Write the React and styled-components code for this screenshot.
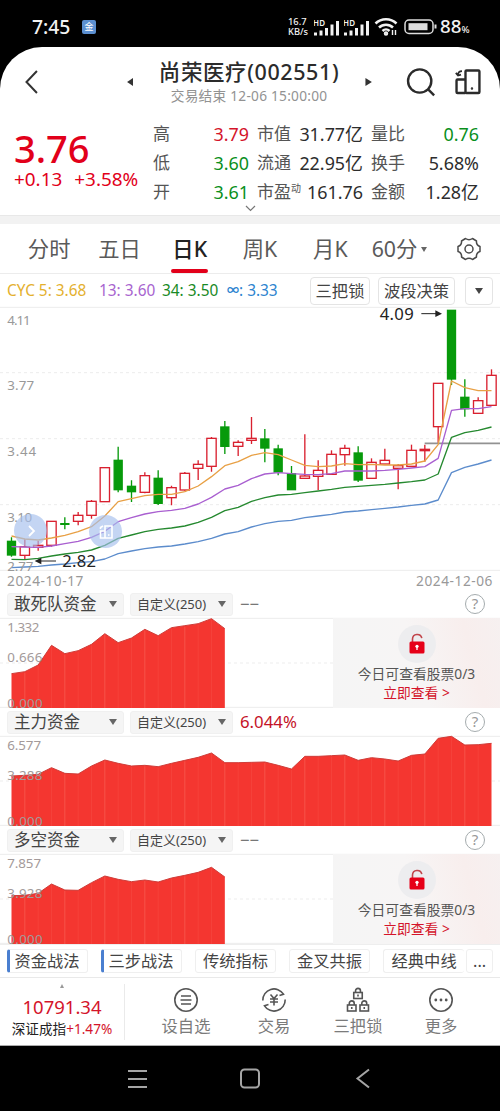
import React from 'react';
import styled, { createGlobalStyle } from 'styled-components';

const RED = '#e2001a';
const GREEN = '#0a8f1c';

const GlobalStyle = createGlobalStyle`
  * { box-sizing: border-box; }
  body {
    margin: 0;
    background: #000;
    font-family: "Noto Sans", "Noto Sans CJK SC", sans-serif;
    color: #333;
  }
`;

const Screen = styled.div`
  width: 500px;
  height: 1111px;
  display: flex;
  flex-direction: column;
  background: #000;
  overflow: hidden;
  white-space: nowrap;
`;

const Page = styled.main`
  height: 999px;
  border-radius: 42px 42px 0 0;
  background: #fff;
  overflow: hidden;
  border-bottom: 1px solid #aaa;
`;

/* status bar */

const StatusBar = styled.div`
  height: 47px;
  padding: 7px 27px 0 32px;
  display: flex;
  align-items: center;
  color: #f2f2f2;
`;

const Clock = styled.div`
  font-size: 19.3px;
  line-height: 24px;
  font-weight: 500;
  width: 50px;
`;

const AppBadge = styled.div`
  width: 14px;
  height: 14px;
  border-radius: 2px;
  background: #5b8fd0;
  color: #fff;
  font-size: 9px;
  line-height: 13px;
  text-align: center;
`;

const StatusRight = styled.div`
  margin-left: auto;
  display: flex;
  align-items: center;
`;

const NetSpeed = styled.div`
  font-size: 9.3px;
  line-height: 10px;
  font-weight: 500;
  width: 26px;
`;

const Percent = styled.div`
  width: 33px;
  font-size: 18.7px;
  line-height: 24px;
  margin-top: 1px;
  font-weight: 500;
  span { font-size: 9.5px; }
`;

/* header */

const Header = styled.header`
  height: 68px;
  position: relative;
  display: flex;
  align-items: center;
  padding: 2px 18px 0 24px;
`;

const TitleBlock = styled.div`
  width: 200px;
  text-align: center;
`;

const Title = styled.h1`
  margin: 0;
  font-size: 21.5px;
  line-height: 26px;
  font-weight: 500;
  letter-spacing: 0.6px;
  color: #2b2b2b;
`;

const Subtitle = styled.div`
  font-size: 13.7px;
  line-height: 20px;
  margin-top: 1px;
  letter-spacing: 0.25px;
  color: #929292;
`;

/* quote */

const Quote = styled.section`
  height: 100px;
  display: flex;
  padding: 4px 21px 0 14px;
  position: relative;
`;

const PriceBlock = styled.div`
  width: 139px;
  color: ${RED};
`;

const Price = styled.div`
  font-size: 38px;
  line-height: 40px;
  font-weight: 500;
  margin-top: 9px;
`;

const Change = styled.div`
  display: flex;
  gap: 12px;
  font-size: 18.9px;
  line-height: 20px;
  margin-top: 1px;
`;

const Stats = styled.div`
  display: grid;
  grid-template-columns: 96px 106px 108px;
  column-gap: 8px;
  grid-auto-rows: 29px;
`;

const Stat = styled.div`
  display: flex;
  justify-content: space-between;
  align-items: center;
  font-size: 17px;
  line-height: 20px;
  color: #555;
  sup { font-size: 10px; line-height: 10px; vertical-align: 6px; }
`;

const StatValue = styled.span`
  font-size: 17.9px;
  color: ${(p) => p.$color || '#2d2d2d'};
`;

const ExpandMark = styled.svg`
  position: absolute;
  left: 245px;
  bottom: 3px;
`;

const Band = styled.div`
  height: 9px;
  background: #f2f2f2;
  border-top: 1px solid #e8e8e8;
`;

/* period tabs */

const Tabs = styled.nav`
  height: 50px;
  border-bottom: 1px solid #ececec;
  display: flex;
  padding-left: 14px;
`;

const Tab = styled.div`
  width: ${(p) => p.$width || 70.3}px;
  display: flex;
  flex-direction: column;
  align-items: center;
  justify-content: space-between;
  padding-top: 9px;
  font-size: 21.3px;
  line-height: 32px;
  font-weight: ${(p) => (p.$active ? 500 : 400)};
  color: ${(p) => (p.$active ? '#222' : '#5a5a5a')};
  &::after {
    content: '';
    width: 37px;
    height: 4px;
    border-radius: 2px;
    background: ${(p) => (p.$active ? RED : 'transparent')};
  }
`;

const MinuteLabel = styled.div`
  display: flex;
  align-items: center;
  gap: 4px;
`;

const GearCell = styled.div`
  flex: 1;
  display: flex;
  align-items: center;
  justify-content: center;
  padding-left: 4px;
`;

/* indicator row */

const Indicators = styled.div`
  height: 33px;
  display: flex;
  align-items: center;
  padding: 0 7px;
`;

const Indicator = styled.span`
  width: ${(p) => p.$width}px;
  font-size: 15.4px;
  line-height: 20px;
  color: ${(p) => p.$color};
  b { font-size: 12px; line-height: 12px; vertical-align: 1px; }
`;

const OutlineButton = styled.button`
  width: ${(p) => p.$width}px;
  height: 28px;
  margin-left: ${(p) => p.$gap || 0}px;
  padding: 0;
  display: flex;
  align-items: center;
  justify-content: center;
  border: 1px solid #e4e4e4;
  border-radius: 4px;
  background: #fff;
  font-family: inherit;
  font-size: 16.3px;
  line-height: 26px;
  color: #444;
`;

const Down = styled.i`
  display: inline-block;
  border: ${(p) => p.$size || 4.5}px solid transparent;
  border-top: ${(p) => (p.$size || 4.5) + 2}px solid ${(p) => p.$color || '#666'};
  border-bottom: 0;
`;

/* charts */

const ChartWrap = styled.div`
  height: 264px;
  position: relative;
`;

const FloatButton = styled.div`
  position: absolute;
  left: ${(p) => p.$left}px;
  top: ${(p) => p.$top}px;
  width: 33px;
  height: 33px;
  border-radius: 50%;
  background: rgba(164, 190, 236, 0.65);
  display: flex;
  align-items: center;
  justify-content: center;
`;

const Dates = styled.div`
  height: 19px;
  display: flex;
  justify-content: space-between;
  padding: 0 7px;
  font-size: 13.7px;
  line-height: 19px;
  letter-spacing: 0.55px;
  color: #999;
`;

const PanelBar = styled.div`
  height: 28px;
  display: flex;
  align-items: center;
  padding: 0 15px 0 7px;
`;

const Select = styled.div`
  width: ${(p) => p.$width}px;
  height: 23px;
  margin-right: 6px;
  padding: 0 6px;
  display: flex;
  align-items: center;
  justify-content: space-between;
  background: #f5f5f5;
  border: 1px solid #f0f0f0;
  border-radius: 3px;
  font-size: ${(p) => (p.$small ? 13 : 16.5)}px;
  line-height: 20px;
  color: #444;
`;

const PanelValue = styled.span`
  flex: 1;
  margin-left: 1px;
  font-size: 16.8px;
  line-height: 20px;
  color: ${(p) => p.$color || '#777'};
`;

const Help = styled.div`
  width: 20px;
  height: 20px;
  border: 1.5px solid #a5acae;
  border-radius: 50%;
  font-size: 15px;
  line-height: 17px;
  text-align: center;
  color: #999;
`;

const PanelChart = styled.div`
  height: 90px;
  position: relative;
`;

const ChartSvg = styled.svg`
  display: block;
  overflow: visible;
`;

const LockCard = styled.div`
  position: absolute;
  right: 0;
  top: 0;
  width: 167px;
  height: 90px;
  padding-top: 7px;
  display: flex;
  flex-direction: column;
  align-items: center;
  background: linear-gradient(75deg, #f5f5f5 0%, #f7f5f5 50%, #f8eeed 80%, #f6f0f0 100%);
  font-size: 13.8px;
  line-height: 19px;
  color: #555;
`;

const LockCircle = styled.div`
  width: 38px;
  height: 38px;
  margin-bottom: 1px;
  border-radius: 50%;
  background: #ededef;
  display: flex;
  align-items: center;
  justify-content: center;
`;

const LockLink = styled.div`
  color: #d4142a;
`;

/* strategy chips */

const Chips = styled.div`
  height: 34px;
  display: flex;
  align-items: center;
  gap: 13px;
  padding: 0 7px 1px;
  border-top: 1px solid #eee;
  border-bottom: 1px solid #e9e9e9;
`;

const Chip = styled.div`
  width: ${(p) => p.$width || 81.3}px;
  height: 24px;
  border: 1px solid #efefef;
  border-left: ${(p) => (p.$marked ? '3px solid #4a7fd0' : '1px solid #efefef')};
  border-radius: 3px;
  font-size: 16.3px;
  line-height: 22px;
  text-align: center;
  color: #444;
  ${(p) => p.$marked && 'padding-right: 3px;'}
  ${(p) => p.$clipped && 'border-right: 0; margin-right: -11px;'}
`;

/* bottom bar */

const BottomBar = styled.footer`
  height: 68px;
  display: flex;
`;

const IndexBox = styled.div`
  width: 125px;
  height: 56px;
  margin-top: 6px;
  border-right: 1px solid #eaeaea;
  display: flex;
  flex-direction: column;
  align-items: center;
  color: #d4142a;
`;

const UpMark = styled.i`
  border: 2.5px solid transparent;
  border-bottom: 4px solid #999;
  border-top: 0;
`;

const IndexValue = styled.div`
  margin-top: 7px;
  font-size: 18.5px;
  line-height: 24px;
`;

const IndexName = styled.div`
  font-size: 13.6px;
  line-height: 18px;
  margin-top: 1px;
  span { color: #222; }
`;

const Actions = styled.div`
  display: grid;
  grid-template-columns: 92px 84px 84px 82px;
  padding-left: 15px;
`;

const Action = styled.div`
  display: flex;
  flex-direction: column;
  align-items: center;
  padding-top: 9px;
  font-size: 16.3px;
  line-height: 24px;
  color: #7b7b7b;
  svg { margin-bottom: 1px; }
`;

const SystemBar = styled.div`
  height: 65px;
  display: flex;
  align-items: center;
  padding-left: 127px;
  gap: 93px;
`;

// Drawing units are a third of a pixel; candles sit 40 units apart.
const STEP = 40;
const x = (i) => 34.5 + i * STEP;

// direction, high, body top, body bottom, low
const candles = [
  ['d', 712, 724, 765, 770], ['u', 718, 740, 766, 780], ['u', 722, 736, 742, 752],
  ['u', 663, 664, 736, 740], ['d', 652, 671, 673, 688], ['u', 636, 646, 664, 676],
  ['u', 600, 604, 646, 656], ['u', 503, 503, 605, 605], ['d', 440, 481, 569, 577],
  ['d', 541, 559, 575, 606], ['u', 517, 527, 577, 580], ['d', 511, 535, 610, 615],
  ['u', 557, 563, 593, 616], ['u', 516, 520, 570, 572], ['u', 481, 493, 505, 540],
  ['u', 411, 415, 499, 515], ['d', 363, 381, 439, 462], ['u', 421, 427, 439, 468],
  ['u', 351, 415, 421, 432], ['d', 387, 417, 444, 487], ['d', 434, 447, 516, 526],
  ['d', 498, 521, 569, 569], ['u', 403, 528, 535, 535], ['u', 481, 511, 529, 570],
  ['u', 451, 463, 523, 523], ['u', 434, 445, 464, 497], ['d', 439, 459, 540, 546],
  ['u', 475, 487, 535, 535], ['u', 446, 481, 492, 492], ['u', 492, 497, 505, 568],
  ['u', 434, 451, 499, 499], ['u', 434, 448, 452, 485], ['u', 249, 250, 380, 430],
  ['d', 31, 31, 237, 255], ['d', 238, 292, 326, 350], ['u', 292, 302, 340, 340],
  ['u', 208, 226, 316, 316],
];

const averages = [
  ['#e8a045', [708, 717, 720, 714, 706, 695, 680, 648, 605, 596, 587, 583, 583, 575, 558, 530, 497, 485, 466, 458, 464, 480, 496, 500, 498, 491, 494, 493, 495, 495, 492, 483, 434, 243, 263, 272, 272]],
  ['#a95fd0', [740, 741, 742, 738, 731, 724, 712, 694, 665, 653, 642, 635, 631, 625, 612, 592, 567, 556, 536, 522, 518, 521, 523, 524, 521, 513, 513, 513, 511, 508, 504, 500, 475, 331, 326, 326, 320]],
  ['#25892f', [778, 779, 775, 768, 762, 757, 750, 736, 715, 705, 695, 688, 684, 678, 667, 652, 632, 622, 604, 593, 585, 583, 578, 573, 568, 562, 559, 556, 553, 549, 545, 540, 522, 412, 398, 391, 381]],
  ['#5c8ccc', [803, 801, 799, 795, 792, 788, 785, 777, 761, 753, 746, 741, 738, 732, 725, 715, 702, 695, 681, 671, 664, 661, 653, 648, 643, 636, 633, 629, 625, 621, 616, 612, 600, 518, 502, 492, 480]],
];

const panels = [
  {
    name: '敢死队资金',
    value: '−−',
    locked: true,
    labels: ['1.332', '0.666', '0.000'],
    points: [167, 161, 141, 82, 107, 98, 79, 47, 74, 60, 34, 53, 29, 23, 17, 2, 32],
  },
  {
    name: '主力资金',
    value: '6.044%',
    labels: ['6.577', '3.288', '0.000'],
    points: [120, 118, 115, 95, 112, 114, 90, 72, 82, 90, 88, 92, 82, 73, 64, 51, 80, 80, 79, 78, 88, 99, 61, 61, 59, 57, 73, 65, 69, 75, 58, 54, 7, 1, 27, 26, 22],
  },
  {
    name: '多空资金',
    value: '−−',
    locked: true,
    labels: ['7.857', '3.928', '0.000'],
    points: [125, 124, 118, 90, 108, 109, 86, 66, 76, 83, 78, 84, 72, 64, 55, 40, 69],
  },
];

const stats = [
  ['高', '3.79', '#d4142a'], ['市值', '31.77亿'], ['量比', '0.76', GREEN],
  ['低', '3.60', GREEN], ['流通', '22.95亿'], ['换手', '5.68%'],
  ['开', '3.61', GREEN], [<>市盈<sup>动</sup></>, '161.76'], ['金额', '1.28亿'],
];

const linePath = (ys) => ys.map((y, i) => `${i ? 'L' : 'M'}${x(i)} ${y}`).join('');

function Candle({ index, data }) {
  const [dir, high, top, bottom, low] = data;
  const cx = x(index);
  const up = dir === 'u';
  const color = up ? '#d9202f' : '#079a0b';
  return (
    <g stroke={color} strokeWidth="4" fill={up ? '#fff' : color}>
      <path d={`M${cx} ${high}V${top}M${cx} ${bottom}V${low}`} />
      <rect x={cx - (up ? 14 : 12)} y={top} width={up ? 28 : 24} height={bottom - top} />
    </g>
  );
}

function KChart() {
  return (
    <ChartWrap>
      <ChartSvg width="500" height="264" viewBox="0 21 1500 792">
        <path d="M0 22H1500M0 811H1500" stroke="#ececec" strokeWidth="3" />
        <path d="M0 218H1500M0 416H1500M0 614H1500" stroke="#ededed" strokeWidth="3" strokeDasharray="9 9" />
        {candles.map((c, i) => <Candle key={i} index={i} data={c} />)}
        <path d="M1274 430H1500" stroke="#929292" strokeWidth="5" />
        {averages.map(([color, ys]) => (
          <path key={color} d={linePath(ys)} fill="none" stroke={color} strokeWidth="4" strokeLinejoin="round" />
        ))}
        <g fontSize="40" fill="#999">
          <text x="22" y="74" textLength="70">4.11</text>
          <text x="22" y="271" textLength="80">3.77</text>
          <text x="22" y="469" textLength="86">3.44</text>
          <text x="22" y="667" textLength="74">3.10</text>
          <text x="22" y="812" textLength="78">2.77</text>
        </g>
        <g fontSize="50" fill="#222">
          <text x="1139" y="59" textLength="102">4.09</text>
          <text x="187" y="802" textLength="101">2.82</text>
        </g>
        <path d="M1264 41H1310M122 783H168" stroke="#222" strokeWidth="3" />
        <path d="M1306 31L1326 41L1306 51ZM124 773L104 783L124 793Z" fill="#222" />
      </ChartSvg>
      <FloatButton $left={14} $top={207}>
        <svg width="16" height="16" fill="none" stroke="#fff" strokeWidth="1.8">
          <path d="M6 3l5 5-5 5" />
        </svg>
      </FloatButton>
      <FloatButton $left={89} $top={208}>
        <svg width="18" height="18" fill="none" stroke="#fff" strokeWidth="1.6">
          <path d="M8 3h7v12H8zM8 8H3.500v7H8M3.500 6V4.500L6 3M11 12h1.500" />
        </svg>
      </FloatButton>
    </ChartWrap>
  );
}

function Panel({ name, value, locked, labels, points }) {
  return (
    <section>
      <PanelBar>
        <Select $width={117}>{name}<Down /></Select>
        <Select $width={103} $small>自定义(250)<Down /></Select>
        <PanelValue $color={locked ? undefined : '#c41227'}>{value}</PanelValue>
        <Help>?</Help>
      </PanelBar>
      <PanelChart>
        <ChartSvg width="500" height="90" viewBox="0 0 1500 270">
          <path d="M0 1H1500M0 268H1500" stroke="#ececec" strokeWidth="3" />
          <path d="M0 135H1500" stroke="#ededed" strokeWidth="3" strokeDasharray="9 9" />
          <path d={`${linePath(points)}V270H34.5Z`} fill="#f43630" />
          {points.slice(1, -1).map((y, i) => (
            <path key={i} d={`M${x(i + 1)} ${y + 3}V270`} stroke="#f8584f" strokeWidth={i % 3 ? 1 : 2.500} />
          ))}
          <path d={linePath(points)} fill="none" stroke="#cf3c38" strokeWidth="3" />
          <g fontSize="40" fill="#a39a9a">
            <text x="22" y="42" textLength={labels[0] === '1.332' ? 96 : 101}>{labels[0]}</text>
            <text x="22" y="131" textLength="105">{labels[1]}</text>
            <text x="22" y="269" textLength="106">{labels[2]}</text>
          </g>
        </ChartSvg>
        {locked && (
          <LockCard>
            <LockCircle>
              <svg width="18" height="22" viewBox="0 0 18 22">
                <path d="M4.500 9V6a4.700 4.700 0 0 1 9.300-.8" fill="none" stroke="#c1454b" strokeWidth="1.6" />
                <rect x="1.500" y="8.500" width="15" height="12" rx="1.500" fill="#e60018" />
                <circle cx="9" cy="13.300" r="1.600" fill="#fff" />
                <path d="M9 13.500V17" stroke="#fff" strokeWidth="1.300" />
              </svg>
            </LockCircle>
            <div>今日可查看股票0/3</div>
            <LockLink>立即查看 &gt;</LockLink>
          </LockCard>
        )}
      </PanelChart>
    </section>
  );
}

function Signal() {
  return (
    <svg width="30" height="19" viewBox="0 0 30 19" fill="#f2f2f2">
      <text x="-1" y="7.500" fontSize="8" fontWeight="600" textLength="12">HD</text>
      <rect x="0" y="14.500" width="3" height="3" />
      <rect x="5.500" y="12.500" width="3" height="5" />
      <rect x="11" y="10" width="3" height="7.500" />
      <rect x="16.500" y="6.500" width="3" height="11" />
      <rect x="22" y="3" width="3" height="14.500" />
    </svg>
  );
}

function PadLock({ at }) {
  return (
    <g transform={`translate(${at})`}>
      <rect x="0" y="4" width="8.500" height="6" />
      <path d="M1.800 4V2.300a2.450 2.450 0 0 1 4.900 0V4M4.250 6v2" />
    </g>
  );
}

function App() {
  return (
    <Screen>
      <GlobalStyle />
      <StatusBar>
        <Clock>7:45</Clock>
        <AppBadge>金</AppBadge>
        <StatusRight>
          <NetSpeed>16.7<br />KB/s</NetSpeed>
          <Signal />
          <Signal />
          <svg width="30" height="20" viewBox="0 0 30 20" fill="none" stroke="#f2f2f2" strokeWidth="2.500">
            <path d="M1.500 6.500a15 15 0 0 1 21 0M5 10.500a10 10 0 0 1 14 0M8.500 14a5 5 0 0 1 7 0" />
            <circle cx="12" cy="16.500" r="1" />
            <path d="M18.500 13v5M21.500 13v5" strokeWidth="1.400" />
          </svg>
          <svg width="36" height="16" viewBox="0 0 36 16" fill="none" stroke="#ddd" strokeWidth="1.500">
            <rect x="1" y="1" width="28" height="13.500" rx="4" />
            <rect x="4.500" y="4.200" width="19" height="7" fill="#ddd" stroke="none" />
            <path d="M31.500 5.500v4" strokeWidth="2" />
          </svg>
          <Percent>88<span>%</span></Percent>
        </StatusRight>
      </StatusBar>

      <Page>
        <Header>
          <svg width="126" height="26" viewBox="0 0 126 26">
            <path d="M13 2L2.500 13L13 24" fill="none" stroke="#333" strokeWidth="2" />
            <path d="M109.500 9V17L103.500 13Z" fill="#333" />
          </svg>
          <TitleBlock>
            <Title>尚荣医疗(002551)</Title>
            <Subtitle>交易结束 12-06 15:00:00</Subtitle>
          </TitleBlock>
          <svg width="134" height="32" viewBox="350 66 134 32" fill="none" stroke="#2b2b2b" strokeWidth="2.400">
            <path d="M366.500 78V86L373 82Z" fill="#333" stroke="none" />
            <circle cx="421" cy="81" r="11.700" />
            <path d="M429.500 89.500L435.500 95.500" />
            <rect x="467" y="70.500" width="14" height="22.500" rx="1" />
            <path d="M467 79.500H459Q458 79.500 458 80.500V92Q458 93 459 93H467" />
            <path d="M463.500 71Q459.500 71 459.500 75M457.300 72.800L459.500 75.500L462.500 74.500" strokeWidth="1.800" />
            <circle cx="473.500" cy="88.500" r="0.500" strokeWidth="1.500" />
          </svg>
        </Header>

        <Quote>
          <PriceBlock>
            <Price>3.76</Price>
            <Change><span>+0.13</span><span>+3.58%</span></Change>
          </PriceBlock>
          <Stats>
            {stats.map(([label, value, color]) => (
              <Stat key={value}>
                <span>{label}</span>
                <StatValue $color={color}>{value}</StatValue>
              </Stat>
            ))}
          </Stats>
          <ExpandMark width="11" height="7" fill="none" stroke="#777" strokeWidth="1.200">
            <path d="M1 1l4.500 4.500L10 1" />
          </ExpandMark>
        </Quote>
        <Band />

        <Tabs>
          <Tab>分时</Tab>
          <Tab>五日</Tab>
          <Tab $active>日K</Tab>
          <Tab>周K</Tab>
          <Tab>月K</Tab>
          <Tab $width={68}>
            <MinuteLabel>60分<Down $size={3.5} /></MinuteLabel>
          </Tab>
          <GearCell>
            <svg width="26" height="26" viewBox="0 0 26 26" fill="none" stroke="#4a4a4a" strokeWidth="1.500">
              <path d="M9.500 2.500Q13 5 16.500 2.500L20.500 5Q20 9.300 24 10.500V15.500Q20 16.700 20.500 21L16.500 23.500Q13 21 9.500 23.500L5.500 21Q6 16.700 2 15.500V10.500Q6 9.300 5.500 5Z" strokeLinejoin="round" />
              <circle cx="13" cy="13" r="4" />
            </svg>
          </GearCell>
        </Tabs>

        <Indicators>
          <Indicator $width={92} $color="#e4b02e">CYC 5: 3.68</Indicator>
          <Indicator $width={63} $color="#a864cf">13: 3.60</Indicator>
          <Indicator $width={65} $color="#188a25">34: 3.50</Indicator>
          <Indicator $width={83} $color="#2d84cf"><b>∞</b>: 3.33</Indicator>
          <OutlineButton $width={60}>三把锁</OutlineButton>
          <OutlineButton $width={77} $gap={8}>波段决策</OutlineButton>
          <OutlineButton $width={28} $gap={10}><Down $color="#444" /></OutlineButton>
        </Indicators>

        <KChart />
        <Dates><span>2024-10-17</span><span>2024-12-06</span></Dates>

        {panels.map((p) => <Panel key={p.name} {...p} />)}

        <Chips>
          <Chip $marked>资金战法</Chip>
          <Chip $marked>三步战法</Chip>
          <Chip>传统指标</Chip>
          <Chip>金叉共振</Chip>
          <Chip $clipped>经典中线</Chip>
          <Chip $width={27}>...</Chip>
        </Chips>

        <BottomBar>
          <IndexBox>
            <UpMark />
            <IndexValue>10791.34</IndexValue>
            <IndexName><span>深证成指</span>+1.47%</IndexName>
          </IndexBox>
          <Actions>
            <Action>
              <svg width="26" height="26" viewBox="0 0 26 26" fill="none" stroke="#555" strokeWidth="1.600">
                <circle cx="13" cy="13" r="11.200" />
                <path d="M8 9h10M7.500 13h11M8 17h10" />
              </svg>
              设自选
            </Action>
            <Action>
              <svg width="26" height="26" viewBox="0 0 26 26" fill="none" stroke="#555" strokeWidth="1.600">
                <path d="M1.800 13.500A11.200 11.200 0 0 1 22.500 7.200L18.500 8.500M24.200 12.500A11.200 11.200 0 0 1 3.500 18.800L7.500 17.500" />
                <path d="M9.500 7.500L13 11.500L16.500 7.500M13 11.500V18.500M9 12H17M9 15H17" />
              </svg>
              交易
            </Action>
            <Action>
              <svg width="26" height="26" viewBox="0 0 26 26" fill="none" stroke="#555" strokeWidth="1.600">
                <PadLock at="8.750,1.500" />
                <PadLock at="2.500,14" />
                <PadLock at="15,14" />
              </svg>
              三把锁
            </Action>
            <Action>
              <svg width="26" height="26" viewBox="0 0 26 26" fill="#555">
                <circle cx="13" cy="13" r="11.200" fill="none" stroke="#555" strokeWidth="1.600" />
                <circle cx="7.800" cy="13" r="1.400" />
                <circle cx="13" cy="13" r="1.400" />
                <circle cx="18.200" cy="13" r="1.400" />
              </svg>
              更多
            </Action>
          </Actions>
        </BottomBar>
      </Page>

      <SystemBar>
        <svg width="20" height="22" stroke="#a5a5a5" strokeWidth="2">
          <path d="M1 3h19M1 11h19M1 19h19" />
        </svg>
        <svg width="22" height="22" viewBox="1 0 22 22" fill="none" stroke="#a5a5a5" strokeWidth="2">
          <rect x="2" y="1.500" width="18" height="18" rx="3.500" />
        </svg>
        <svg width="16" height="22" fill="none" stroke="#a5a5a5" strokeWidth="2">
          <path d="M14 1.500L2.500 10.500L14 19.500" />
        </svg>
      </SystemBar>
    </Screen>
  );
}

export default App;
